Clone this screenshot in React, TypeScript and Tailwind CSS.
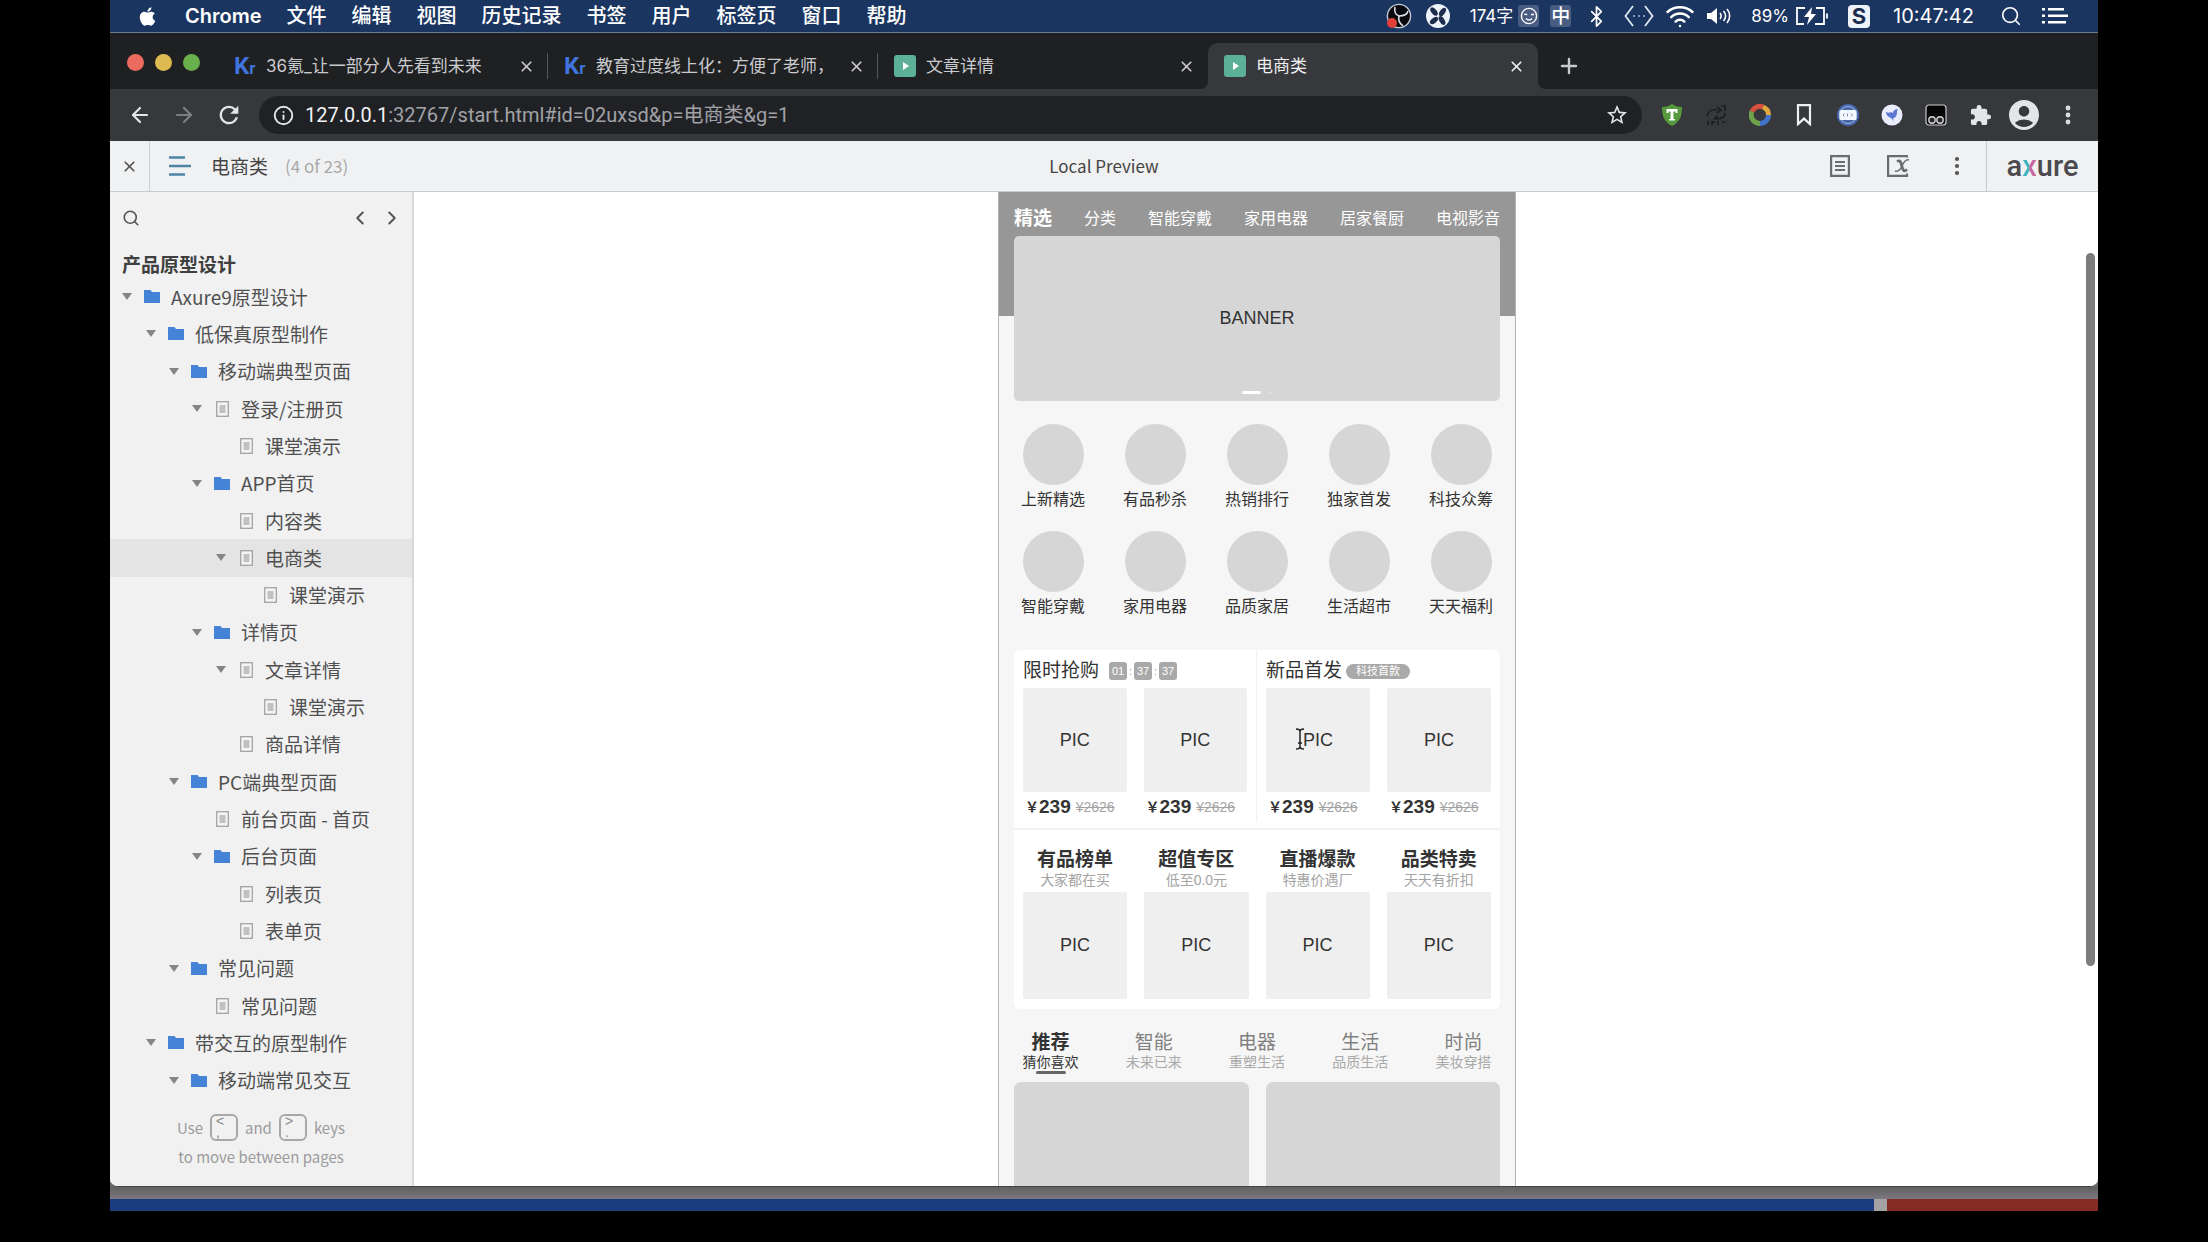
import type { ReactNode } from "react";
import clsx from "clsx";
import {
  ArrowLeft,
  ArrowRight,
  Bluetooth,
  ChevronLeft,
  ChevronRight,
  EllipsisVertical,
  Info,
  Plus,
  Search,
  Wifi,
  X,
} from "lucide-react";
import { FaApple } from "react-icons/fa";
import { MdAccountCircle, MdExtension, MdRefresh, MdStarBorder } from "react-icons/md";

const MENUS = ["文件", "编辑", "视图", "历史记录", "书签", "用户", "标签页", "窗口", "帮助"];

const TABS = [
  { title: "36氪_让一部分人先看到未来", icon: "kr" },
  { title: "教育过度线上化：方便了老师，", icon: "kr" },
  { title: "文章详情", icon: "axure" },
  { title: "电商类", icon: "axure", active: true },
];

type Node = {
  label: string;
  level: number;
  kind: "folder" | "page";
  open?: boolean;
  selected?: boolean;
};

const TREE: Node[] = [
  { label: "Axure9原型设计", level: 0, kind: "folder", open: true },
  { label: "低保真原型制作", level: 1, kind: "folder", open: true },
  { label: "移动端典型页面", level: 2, kind: "folder", open: true },
  { label: "登录/注册页", level: 3, kind: "page", open: true },
  { label: "课堂演示", level: 4, kind: "page" },
  { label: "APP首页", level: 3, kind: "folder", open: true },
  { label: "内容类", level: 4, kind: "page" },
  { label: "电商类", level: 4, kind: "page", open: true, selected: true },
  { label: "课堂演示", level: 5, kind: "page" },
  { label: "详情页", level: 3, kind: "folder", open: true },
  { label: "文章详情", level: 4, kind: "page", open: true },
  { label: "课堂演示", level: 5, kind: "page" },
  { label: "商品详情", level: 4, kind: "page" },
  { label: "PC端典型页面", level: 2, kind: "folder", open: true },
  { label: "前台页面 - 首页", level: 3, kind: "page" },
  { label: "后台页面", level: 3, kind: "folder", open: true },
  { label: "列表页", level: 4, kind: "page" },
  { label: "表单页", level: 4, kind: "page" },
  { label: "常见问题", level: 2, kind: "folder", open: true },
  { label: "常见问题", level: 3, kind: "page" },
  { label: "带交互的原型制作", level: 1, kind: "folder", open: true },
  { label: "移动端常见交互", level: 2, kind: "folder", open: true },
];

const INDENT = ["pl-3", "pl-9", "pl-[59px]", "pl-[82px]", "pl-[106px]", "pl-[130px]"];

const CHANNELS = ["分类", "智能穿戴", "家用电器", "居家餐厨", "电视影音"];

const SHORTCUTS = [
  "上新精选",
  "有品秒杀",
  "热销排行",
  "独家首发",
  "科技众筹",
  "智能穿戴",
  "家用电器",
  "品质家居",
  "生活超市",
  "天天福利",
];

const ZONES = [
  { title: "有品榜单", sub: "大家都在买" },
  { title: "超值专区", sub: "低至0.0元" },
  { title: "直播爆款", sub: "特惠价遇厂" },
  { title: "品类特卖", sub: "天天有折扣" },
];

const FEEDS = [
  { title: "推荐", sub: "猜你喜欢", active: true },
  { title: "智能", sub: "未来已来" },
  { title: "电器", sub: "重塑生活" },
  { title: "生活", sub: "品质生活" },
  { title: "时尚", sub: "美妆穿搭" },
];

export default function App() {
  return (
    <div className="flex h-screen min-h-[900px] flex-col overflow-hidden bg-black px-[110px] pb-[31px] font-['Inter','Noto_Sans_CJK_SC',sans-serif]">
      <MenuBar />
      <div className="flex min-h-0 flex-1 flex-col bg-[#6d6b6b]">
        <div className="flex min-h-0 flex-1 flex-col overflow-hidden rounded-b-[8px] border-b border-[#444] bg-white">
          <TabStrip />
          <Toolbar />
          <PlayerHeader />
          <div className="flex min-h-0 flex-1">
            <Sidebar />
            <main className="relative min-w-0 flex-1 overflow-hidden bg-white pl-[2px]">
              <Phone />
              <div className="absolute top-[61px] right-[3px] h-[713px] w-[9px] rounded-full bg-[#7d7d7d]" />
            </main>
          </div>
        </div>
        {/* Desktop peeking out under the window */}
        <div className="h-3 bg-linear-to-b from-[#626062] to-[#7b7880]" />
        <div className="flex h-3 gap-[13px] bg-[#a5a2a4]">
          <div className="flex-1 bg-[#1c3c80]" />
          <div className="w-[211px] bg-[#862b24]" />
        </div>
      </div>
    </div>
  );
}

/* ---------- macOS menu bar ---------- */

function MenuBar() {
  return (
    <header className="flex h-[33px] shrink-0 items-center border-b border-[#6c7a92] bg-[#1b3561] pr-[30px] pl-[27px] text-white">
      <FaApple className="size-[21px]" />
      <nav className="ml-[27px] flex items-center gap-[25px] text-[20px] leading-none font-medium whitespace-nowrap">
        <span className="font-semibold">Chrome</span>
        {MENUS.map((m) => (
          <span key={m}>{m}</span>
        ))}
      </nav>

      <div className="ml-auto flex items-center text-[17px] leading-none whitespace-nowrap">
        <svg viewBox="0 0 26 26" className="size-[26px]">
          <circle cx="13" cy="13" r="11.6" fill="#0a0a0e" stroke="#c3cbd8" strokeWidth="1.4" />
          <path
            d="M9 4c-1 5 1 8 4 9M13 13c4 0 8-1 9-5M13 13c-1 4 0 7 4 10"
            fill="none"
            stroke="#dbe0e8"
            strokeWidth="1.6"
          />
          <circle cx="6" cy="20" r="5" fill="#e04037" />
        </svg>
        <svg viewBox="0 0 24 24" className="ml-[14px] size-6">
          <circle cx="12" cy="12" r="12" fill="#eef3fa" />
          <g fill="#1b2c4c">
            <ellipse cx="8" cy="7.500" rx="2.600" ry="4.800" transform="rotate(-40 8 7.500)" />
            <ellipse cx="16.500" cy="8" rx="2.600" ry="4.800" transform="rotate(35 16.500 8)" />
            <ellipse cx="8" cy="16.500" rx="2.600" ry="4.800" transform="rotate(50 8 16.500)" />
            <ellipse cx="16" cy="16.500" rx="2.600" ry="4.800" transform="rotate(-30 16 16.500)" />
          </g>
        </svg>
        <span className="ml-5">174字</span>
        <span className="ml-[5px] flex h-[22px] w-[21px] items-center justify-center rounded-[3px] bg-white/20">
          <svg viewBox="0 0 18 18" className="size-[18px]" fill="none" stroke="#fff" strokeWidth="1.4">
            <circle cx="9" cy="9" r="7.6" />
            <path d="M4.500 8c.5-1 2-1 2.500 0M11 7.500h3M6 11.500c1.500 2 4.500 2 6 0" />
          </svg>
        </span>
        <span className="ml-[11px] flex h-[22px] w-[21px] items-center justify-center rounded-[3px] bg-white/20 text-[19px] font-medium">
          中
        </span>
        <Bluetooth className="ml-[14px] size-[23px]" strokeWidth={1.8} />
        <svg viewBox="0 0 30 22" className="ml-4 h-[22px] w-[30px]" fill="none" stroke="#dfe6f0" strokeWidth="1.800">
          <path d="M9 1 1.500 11 9 21M21 1l7.500 10L21 21" />
          <path d="M9 11h12" strokeDasharray="2 3" stroke="#7f93b3" />
        </svg>
        <Wifi className="ml-[11px] size-[30px]" strokeWidth={2} />
        <svg viewBox="0 0 24 18" className="ml-3 h-[18px] w-6" fill="none" stroke="#fff" strokeWidth="1.600">
          <path d="M0 6h4l6-5v16l-6-5H0z" fill="#fff" stroke="none" />
          <path d="M13 6c1.500 2 1.500 4 0 6M16.500 4c2.500 3 2.500 7 0 10M20 2c3.500 4 3.500 10 0 14" />
        </svg>
        <span className="ml-5">89%</span>
        <svg viewBox="0 0 34 20" className="ml-[6px] h-5 w-[34px]" fill="none" stroke="#fff" strokeWidth="1.800">
          <path d="M10 2H2v16h7M21 2h8v16h-9" />
          <path d="M32 7.500v5" />
          <path d="M17 1 9 11h5l-2 8 9-11h-5z" fill="#fff" stroke="none" />
        </svg>
        <span className="ml-[19px] flex h-[23px] w-[22px] items-center justify-center rounded-[4px] bg-[#eef3fa] text-[22px] leading-none font-bold text-[#1b2c4c]">
          S
        </span>
        <span className="ml-[23px] text-[20px]">10:47:42</span>
        <Search className="ml-[26px] size-[22px]" strokeWidth={1.8} />
        <svg viewBox="0 0 26 16" className="ml-5 h-4 w-[26px]" fill="#fff">
          <path d="M0 0h3v2.500H0zM6 0h16v2.500H6zM0 6.500h3V9H0zM6 6.500h20V9H6zM0 13h3v2.500H0zM6 13h18v2.500H6z" />
        </svg>
      </div>
    </header>
  );
}

/* ---------- Chrome ---------- */

function TabStrip() {
  return (
    <div className="flex h-14 shrink-0 items-end bg-[#1f2022] text-[#c9cace]">
      <div className="flex h-[46px] w-[108px] items-center gap-[11px] pb-[8px] pl-[17px]">
        <span className="size-[17px] rounded-full bg-[#ec6b5f]" />
        <span className="size-[17px] rounded-full bg-[#dfba52]" />
        <span className="size-[17px] rounded-full bg-[#67b04c]" />
      </div>
      {TABS.map((t, i) => (
        <div
          key={t.title}
          className={clsx(
            "relative flex h-[46px] w-[330px] items-center pr-[13px] pl-4",
            t.active && "rounded-t-[10px] bg-[#37383c] text-[#eeeff1]"
          )}
        >
          {t.icon === "kr" ? <KrIcon /> : <AxureTabIcon />}
          <span className="ml-[10px] flex-1 text-[17px] leading-6 whitespace-nowrap">{t.title}</span>
          <button aria-label="关闭标签页" className="flex size-[18px] items-center justify-center">
            <X className="size-[17px]" strokeWidth={2.4} />
          </button>
          {i < 2 && <span className="absolute right-0 h-[26px] w-px bg-[#54565a]" />}
          {t.active && (
            <>
              <span className="absolute bottom-0 -left-2 size-2 bg-[radial-gradient(circle_at_top_left,transparent_8px,#37383c_8px)]" />
              <span className="absolute -right-2 bottom-0 size-2 bg-[radial-gradient(circle_at_top_right,transparent_8px,#37383c_8px)]" />
            </>
          )}
        </div>
      ))}
      <button aria-label="新标签页" className="ml-[19px] flex h-[46px] items-center">
        <Plus className="size-[24px]" strokeWidth={2.4} />
      </button>
    </div>
  );
}

function KrIcon() {
  return (
    <span className="flex w-[22px] items-baseline font-['Roboto',sans-serif] text-[24px] leading-none font-bold text-[#3f74dc]">
      K<span className="text-[17px]">r</span>
    </span>
  );
}

function AxureTabIcon() {
  return (
    <svg viewBox="0 0 22 22" className="size-[22px] shrink-0">
      <rect width="22" height="22" rx="3" fill="#5cb095" />
      <path d="M9 7l6 4-6 4z" fill="#fff" />
    </svg>
  );
}

function Toolbar() {
  return (
    <div className="flex h-[52px] shrink-0 items-center bg-[#37383c] pr-[18px] pl-[18px] text-[#e4e5e8]">
      <button aria-label="后退">
        <ArrowLeft className="size-6" strokeWidth={2.2} />
      </button>
      <button aria-label="前进" className="ml-5 text-[#7c7e83]">
        <ArrowRight className="size-6" strokeWidth={2.2} />
      </button>
      <button aria-label="重新加载" className="ml-[19px]">
        <MdRefresh className="size-7" />
      </button>
      <div className="ml-4 flex h-[38px] flex-1 items-center rounded-full bg-[#202125] pr-[13px] pl-[14px]">
        <Info className="size-[21px]" strokeWidth={2.2} />
        <div className="relative ml-[11px] flex-1">
          <input
            aria-label="地址"
            className="w-full bg-transparent font-['Roboto','Noto_Sans_CJK_SC',sans-serif] text-[20px] leading-7 text-[#a0a2a7] outline-none"
            defaultValue="127.0.0.1:32767/start.html#id=02uxsd&p=电商类&g=1"
          />
          {/* Host part is highlighted over the address */}
          <span
            aria-hidden
            className="pointer-events-none absolute top-0 left-0 bg-[#202125] font-['Roboto',sans-serif] text-[20px] leading-7 text-[#f1f2f4]"
          >
            127.0.0.1
          </span>
        </div>
        <button aria-label="收藏">
          <MdStarBorder className="size-6" />
        </button>
      </div>

      <div className="ml-[19px] flex items-center gap-[22px]">
        <svg viewBox="0 0 22 22" className="size-[22px]">
          <path d="M1 3c4 0 7-1 10-3 3 2 6 3 10 3 0 9-2 15-10 19C3 18 1 12 1 3z" fill="#55993c" />
          <path d="M5.500 5h11v4h-2V7.500h-2V15h1.500v1.500H8V15h1.500V7.500h-2V9h-2z" fill="#fff" />
        </svg>
        <svg viewBox="0 0 22 22" className="size-[22px]" fill="none" stroke="#1b1c1e" strokeWidth="1.600">
          <path d="M2 12c1-5 5-7 10-6M12 3l4 3-4 3M20 9c0 4-3 6-9 6M13 12l-4 3M16 2h4v5M3 17v4M7 17v4M7 18h3M13 17v4M17 18h3" />
        </svg>
        <svg viewBox="0 0 22 22" className="size-[22px]" fill="none" strokeWidth="5">
          <path d="M3 7.500A8.500 8.500 0 0 1 14 3" stroke="#d9503f" />
          <path d="M14 3a8.500 8.500 0 0 1 5.500 8" stroke="#e0a63c" />
          <path d="M19.500 11A8.500 8.500 0 0 1 11 19.500" stroke="#4275c9" />
          <path d="M11 19.500A8.500 8.500 0 0 1 3 7.500" stroke="#6fa24c" />
        </svg>
        <svg viewBox="0 0 22 22" className="size-[22px]" fill="none" stroke="#eeeff1" strokeWidth="2.200">
          <path d="M5 1.100h12v19l-6-5.500-6 5.500z" />
        </svg>
        <svg viewBox="0 0 22 22" className="size-[22px]">
          <circle cx="11" cy="11" r="11" fill="#4767ab" />
          <circle cx="11" cy="11" r="8.500" fill="none" stroke="#9fb4e0" />
          <rect x="2.500" y="6" width="17" height="10" rx="1.500" fill="#f4f7fd" />
          <path d="M7.500 9.500 6 11l1.500 1.500M10.500 9.500v3M14 9.500l1.500 1.500-1.500 1.500" stroke="#8090b4" fill="none" />
        </svg>
        <svg viewBox="0 0 22 22" className="size-[22px]">
          <circle cx="11" cy="11" r="10.500" fill="#e9edfb" />
          <path d="M5 8c2 1 4 1 5 0l2 1c0-2 2-4 5-4-1 1-1 2-1 3 0 4-2 6-4 6l1 3-3-3C7 13 5 11 5 8z" fill="#5c78d4" />
        </svg>
        <svg viewBox="0 0 22 22" className="size-[22px]">
          <rect x="1" y="1" width="20" height="20" rx="3" fill="#050505" stroke="#c9cacc" strokeWidth="1.200" />
          <g fill="#26272a" stroke="#d7d8da" strokeWidth="1.400">
            <circle cx="7" cy="16" r="3.200" />
            <circle cx="15" cy="16" r="3.200" />
          </g>
        </svg>
        <MdExtension className="size-[23px]" />
      </div>
      <MdAccountCircle className="ml-[14px] size-9" />
      <button aria-label="更多" className="ml-[14px]">
        <EllipsisVertical className="size-6" strokeWidth={2.8} />
      </button>
    </div>
  );
}

/* ---------- Axure player ---------- */

function PlayerHeader() {
  return (
    <div className="relative flex h-[51px] shrink-0 items-center border-b border-[#c9cacb] bg-[#f0f1f2] font-['Noto_Sans_CJK_SC',sans-serif] text-[#555]">
      <button aria-label="关闭" className="flex h-full w-10 items-center justify-center border-r border-[#cfcfcf]">
        <X className="size-[17px]" strokeWidth={2.4} />
      </button>
      <svg viewBox="0 0 22 20" className="ml-[19px] h-5 w-[22px]" stroke="#4f83a6" strokeWidth="2.400">
        <path d="M0 1.500h16M0 10h22M0 18.500h16" />
      </svg>
      <h1 className="ml-5 text-[19px] leading-7 text-[#444]">电商类</h1>
      <span className="ml-[17px] text-[17px] leading-7 text-[#a9a9a9]">(4 of 23)</span>
      <span className="absolute inset-x-0 mx-auto w-fit text-[17px] leading-7 text-[#444]">Local Preview</span>
      <div className="ml-auto flex h-full items-center">
        <svg viewBox="0 0 20 22" className="h-[22px] w-5" fill="none" stroke="#6a6b6e" strokeWidth="2.200">
          <path d="M1.100 1.100h17.800v19.800H1.100zM5 7h10M5 11h10M5 15h10" />
        </svg>
        <svg viewBox="0 0 24 22" className="ml-[37px] h-[22px] w-6">
          <path d="M20 2.500V1.100H1.100v19.800H20V18.500" fill="none" stroke="#6a6b6e" strokeWidth="2.200" />
          <path
            d="M10 6.500c3.500-2 4 1 4.800 4.500s1.700 6.500 5.200 3.500"
            fill="none"
            stroke="#6a6b6e"
            strokeWidth="2.800"
          />
          <path
            d="M22 5c-3.500-1-5.500 2.500-7 6s-3.500 6-7 5"
            fill="none"
            stroke="#6a6b6e"
            strokeWidth="1.500"
          />
        </svg>
        <button aria-label="菜单" className="ml-[34px]">
          <EllipsisVertical className="size-6" strokeWidth={2.2} />
        </button>
        <div className="ml-[17px] flex h-full w-[112px] items-center justify-center border-l border-[#c9c9c9] font-['Roboto',sans-serif] text-[29px] leading-none font-medium text-[#4b4a4f]">
          a<span className="bg-linear-to-r from-[#43b5bd] from-45% to-[#c667a0] to-55% bg-clip-text text-transparent">x</span>
          ure
        </div>
      </div>
    </div>
  );
}

function Sidebar() {
  return (
    <aside className="flex w-[304px] shrink-0 flex-col border-r-2 border-[#d9d9da] bg-[#f1f1f2] font-['Noto_Sans_CJK_SC',sans-serif] text-[#555]">
      <div className="flex h-[52px] shrink-0 items-center pr-[9px] pl-[12px]">
        <button aria-label="搜索">
          <Search className="size-[18px]" strokeWidth={2.2} />
        </button>
        <button aria-label="上一页" className="ml-auto">
          <ChevronLeft className="size-[22px]" strokeWidth={2.2} />
        </button>
        <button aria-label="下一页" className="ml-[10px]">
          <ChevronRight className="size-[22px]" strokeWidth={2.2} />
        </button>
      </div>
      <h2 className="flex h-[34px] shrink-0 items-center pt-[6px] pl-3 text-[19px] leading-6 font-bold text-[#3f3f3f]">
        产品原型设计
      </h2>
      <ul className="flex min-h-0 flex-1 flex-col">
        {TREE.map((n, i) => (
          <li
            key={i}
            className={clsx("flex min-h-0 flex-1 items-center", INDENT[n.level], n.selected && "bg-[#e4e4e5]")}
          >
            <svg viewBox="0 0 10 7" className={clsx("h-[7px] w-[10px]", !n.open && "invisible")} fill="#858585">
              <path d="M0 0h10L5 7z" />
            </svg>
            <span className="ml-3 flex w-4 justify-center">
              {n.kind === "folder" ? <FolderIcon /> : <PageIcon />}
            </span>
            <a href="#" className="ml-[11px] text-[19px] leading-6 whitespace-nowrap text-[#505050]">
              {n.label}
            </a>
          </li>
        ))}
      </ul>
      <div className="flex h-[87px] shrink-0 flex-col items-center pt-[14px] text-[15px] leading-[29px] text-[#9b9b9b]">
        <div className="flex items-center gap-[7px]">
          Use <KeyCap top="<" bottom="," /> and <KeyCap top=">" bottom="." /> keys
        </div>
        <div>to move between pages</div>
      </div>
    </aside>
  );
}

function FolderIcon() {
  return (
    <svg viewBox="0 0 16 13" className="h-[13px] w-4" fill="#4583d6">
      <path d="M0 0h6.500L8 2h8v11H0z" />
    </svg>
  );
}

function PageIcon() {
  return (
    <svg viewBox="0 0 13 16" className="h-4 w-[13px]">
      <rect x=".7" y=".7" width="11.600" height="14.600" fill="#f4f4f4" stroke="#a2a2a2" strokeWidth="1.300" />
      <path d="M3.500 5h6M3.500 7h6M3.500 9h6M3.500 11h6" stroke="#8e8e8e" strokeWidth="1.200" />
    </svg>
  );
}

function KeyCap({ top, bottom }: { top: string; bottom: string }) {
  return (
    <kbd className="flex h-[27px] w-[28px] flex-col rounded-[6px] border-2 border-[#a8a8a8] pl-1 font-['Liberation_Sans',sans-serif] text-[14px] leading-[11px] text-[#8a8a8a]">
      <span>{top}</span>
      <span>{bottom}</span>
    </kbd>
  );
}

/* ---------- Wireframe ---------- */

function Phone() {
  return (
    <div className="mx-auto h-[1100px] w-[518px] border-x border-[#b5b5b5] bg-[linear-gradient(#979797_0_124px,#f6f6f6_124px)] font-['Liberation_Sans','Noto_Sans_CJK_SC',sans-serif] whitespace-nowrap text-[#333]">
      <div className="px-[15px]">
        <nav className="flex h-11 items-center justify-between pt-[10px] text-[16px] leading-6 text-white">
          <span className="text-[19px] font-bold">精选</span>
          {CHANNELS.map((c) => (
            <span key={c}>{c}</span>
          ))}
        </nav>
        <div className="flex h-[165px] flex-col items-center rounded-[5px] bg-[#d6d6d6]">
          <div className="flex flex-1 items-center pt-[10px] text-[18px]">BANNER</div>
          <div className="flex h-[10px] gap-2">
            <span className="h-[3px] w-[19px] rounded-full bg-white" />
            <span className="size-[3px] rounded-full bg-[#e2e2e2]" />
          </div>
        </div>
      </div>

      <div className="grid grid-cols-5 gap-y-[19px] px-[3px] pt-[23px]">
        {SHORTCUTS.map((s) => (
          <div key={s} className="flex flex-col items-center gap-[3px]">
            <span className="h-[61px] w-[61px] rounded-full bg-[#d6d6d6]" />
            <span className="text-[16px] leading-6">{s}</span>
          </div>
        ))}
      </div>

      <div className="px-[15px] pt-[31px]">
        <section className="rounded-[6px] bg-white">
          <div className="grid grid-cols-2 border-b-2 border-[#f2f2f2] pb-[6px]">
            <Deal
              title="限时抢购"
              extra={
                <div className="ml-[10px] flex items-center text-[11px] leading-none text-[#999]">
                  <TimeBox>01</TimeBox>
                  <span className="w-[7px] text-center">:</span>
                  <TimeBox>37</TimeBox>
                  <span className="w-[7px] text-center">:</span>
                  <TimeBox>37</TimeBox>
                </div>
              }
            />
            <Deal
              title="新品首发"
              cursor
              extra={
                <span className="ml-1 flex h-[15px] w-16 items-center justify-center rounded-full bg-[#a9a9a9] text-[11px] leading-none text-white">
                  科技首款
                </span>
              }
            />
          </div>
          <div className="grid grid-cols-4 gap-x-[17px] px-[9px] pt-[19px] pb-[10px]">
            {ZONES.map((z) => (
              <div key={z.title} className="text-center">
                <div className="text-[19px] leading-[21px] font-bold">{z.title}</div>
                <div className="mb-[2px] text-[14px] leading-5 text-[#a3a3a3]">{z.sub}</div>
                <Pic className="h-[107px]" />
              </div>
            ))}
          </div>
        </section>
      </div>

      <div className="grid grid-cols-5 pt-[23px]">
        {FEEDS.map((f) => (
          <div
            key={f.title}
            className={clsx("flex flex-col items-center", f.active ? "text-[#333]" : "text-[#808080]")}
          >
            <span className={clsx("text-[19px] leading-[21px]", f.active && "font-bold")}>{f.title}</span>
            <span className={clsx("text-[14px] leading-[18px]", !f.active && "text-[#a9a9a9]")}>{f.sub}</span>
            {f.active && <span className="h-[3px] w-[30px] rounded-full bg-[#666]" />}
          </div>
        ))}
      </div>

      <div className="grid grid-cols-2 gap-[17px] px-[15px] pt-2">
        <div className="h-[160px] rounded-[7px] bg-[#d6d6d6]" />
        <div className="h-[160px] rounded-[7px] bg-[#d6d6d6]" />
      </div>
    </div>
  );
}

function Deal({ title, extra, cursor }: { title: string; extra: ReactNode; cursor?: boolean }) {
  return (
    <div className={clsx("px-[9px] pt-[9px]", !cursor && "border-r border-[#f2f2f2]")}>
      <div className="flex h-6 items-center">
        <span className="text-[19px] leading-6">{title}</span>
        {extra}
      </div>
      <div className="grid grid-cols-2 gap-x-[17px] pt-[5px]">
        {[0, 1].map((i) => (
          <div key={i} className="relative">
            <Pic className="h-[104px]" />
            {cursor && i === 0 && <IBeam />}
            <div className="flex h-[30px] items-center pl-[2px]">
              <span className="text-[14px] font-bold">￥</span>
              <span className="text-[19px] font-bold">239</span>
              <span className="ml-[5px] text-[14px] text-[#a3a3a3] line-through">¥2626</span>
            </div>
          </div>
        ))}
      </div>
    </div>
  );
}

function TimeBox({ children }: { children: ReactNode }) {
  return (
    <span className="flex h-[18px] w-[18px] items-center justify-center rounded-[3px] bg-[#a9a9a9] text-white">
      {children}
    </span>
  );
}

function Pic({ className }: { className: string }) {
  return (
    <div className={clsx("flex items-center justify-center rounded-[2px] bg-[#efefef] text-[18px]", className)}>
      PIC
    </div>
  );
}

function IBeam() {
  return (
    <svg viewBox="0 0 10 22" className="absolute top-10 left-[29px] h-[22px] w-[10px]" fill="none" stroke="#222">
      <path d="M1 1c2 0 4 1 4 2.500v15C5 20 3 21 1 21M9 1C7 1 5 2 5 3.500M9 21c-2 0-4-1-4-2.500M3 15h4" strokeWidth="1.500" />
    </svg>
  );
}
